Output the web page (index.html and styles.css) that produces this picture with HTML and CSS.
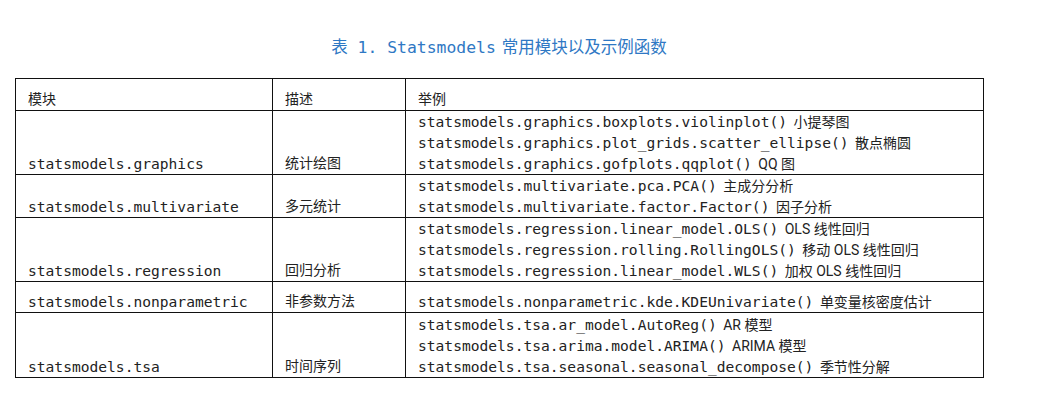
FILE: index.html
```html
<!DOCTYPE html>
<html lang="zh">
<head>
<meta charset="utf-8">
<title>Statsmodels 常用模块以及示例函数</title>
<link rel="stylesheet" href="styles.css">
</head>
<body>
<div class="page">
  <div class="caption"><span class="cjk">表</span><span class="mono"> 1. Statsmodels</span><span class="cjk gap">常用模块以及示例函数</span></div>
  <table class="grid">
    <colgroup>
      <col class="c1"><col class="c2"><col class="c3">
    </colgroup>
    <tr class="h32">
      <th>模块</th><th>描述</th><th>举例</th>
    </tr>
    <tr class="h64">
      <td class="mono">statsmodels.graphics</td>
      <td>统计绘图</td>
      <td>
        <div class="ln"><span class="mono">statsmodels.graphics.boxplots.violinplot()</span> <span class="desc">小提琴图</span></div>
        <div class="ln"><span class="mono">statsmodels.graphics.plot_grids.scatter_ellipse()</span> <span class="desc">散点椭圆</span></div>
        <div class="ln"><span class="mono">statsmodels.graphics.gofplots.qqplot()</span> <span class="desc">QQ 图</span></div>
      </td>
    </tr>
    <tr class="h43">
      <td class="mono">statsmodels.multivariate</td>
      <td>多元统计</td>
      <td>
        <div class="ln"><span class="mono">statsmodels.multivariate.pca.PCA()</span> <span class="desc">主成分分析</span></div>
        <div class="ln"><span class="mono">statsmodels.multivariate.factor.Factor()</span> <span class="desc">因子分析</span></div>
      </td>
    </tr>
    <tr class="h64">
      <td class="mono">statsmodels.regression</td>
      <td>回归分析</td>
      <td>
        <div class="ln"><span class="mono">statsmodels.regression.linear_model.OLS()</span> <span class="desc">OLS 线性回归</span></div>
        <div class="ln"><span class="mono">statsmodels.regression.rolling.RollingOLS()</span> <span class="desc">移动 OLS 线性回归</span></div>
        <div class="ln"><span class="mono">statsmodels.regression.linear_model.WLS()</span> <span class="desc">加权 OLS 线性回归</span></div>
      </td>
    </tr>
    <tr class="h31">
      <td class="mono">statsmodels.nonparametric</td>
      <td>非参数方法</td>
      <td>
        <div class="ln"><span class="mono">statsmodels.nonparametric.kde.KDEUnivariate()</span> <span class="desc">单变量核密度估计</span></div>
      </td>
    </tr>
    <tr class="h65">
      <td class="mono">statsmodels.tsa</td>
      <td>时间序列</td>
      <td>
        <div class="ln"><span class="mono">statsmodels.tsa.ar_model.AutoReg()</span> <span class="desc">AR 模型</span></div>
        <div class="ln"><span class="mono">statsmodels.tsa.arima.model.ARIMA()</span> <span class="desc">ARIMA 模型</span></div>
        <div class="ln"><span class="mono">statsmodels.tsa.seasonal.seasonal_decompose()</span> <span class="desc">季节性分解</span></div>
      </td>
    </tr>
  </table>
</div>
</body>
</html>
```
FILE: styles.css
```css
html, body {
  margin: 0;
  padding: 0;
  background: #ffffff;
}

.page {
  padding: 36px 0 0 15px;
  width: 968px;
  color: #222222;
  font-family: "Roboto", "Noto Sans CJK SC", sans-serif;
}

.caption {
  text-align: center;
  color: #2f78c4;
  font-size: 16.5px;
  line-height: 21px;
  height: 21px;
  margin-bottom: 21px;
}

.caption .mono {
  font-family: "DejaVu Sans Mono", monospace;
  font-size: 16.4px;
}

.caption .gap {
  margin-left: 6px;
}

.cjk {
  font-family: "Noto Sans CJK SC", sans-serif;
}

.grid {
  border-collapse: collapse;
  table-layout: fixed;
  width: 968px;
  font-size: 14px;
  line-height: 21px;
}

.c1 { width: 257px; }
.c2 { width: 133px; }
.c3 { width: 578px; }

.grid th,
.grid td {
  border: 1px solid #111111;
  padding: 0 0 0 12px;
  vertical-align: bottom;
  text-align: left;
  font-weight: normal;
  font-family: "Roboto", "Noto Sans CJK SC", sans-serif;
  white-space: nowrap;
}

.grid .mono,
.grid td.mono {
  font-family: "DejaVu Sans Mono", monospace;
  font-size: 14.6px;
}

.desc {
  font-family: "Roboto", "Noto Sans CJK SC", sans-serif;
  font-size: 14px;
  margin-left: 3px;
}

.ln {
  height: 21px;
}

.h32 { height: 32px; }
.h64 { height: 64px; }
.h43 { height: 43px; }
.h31 { height: 31px; }
.h65 { height: 65px; }
```
